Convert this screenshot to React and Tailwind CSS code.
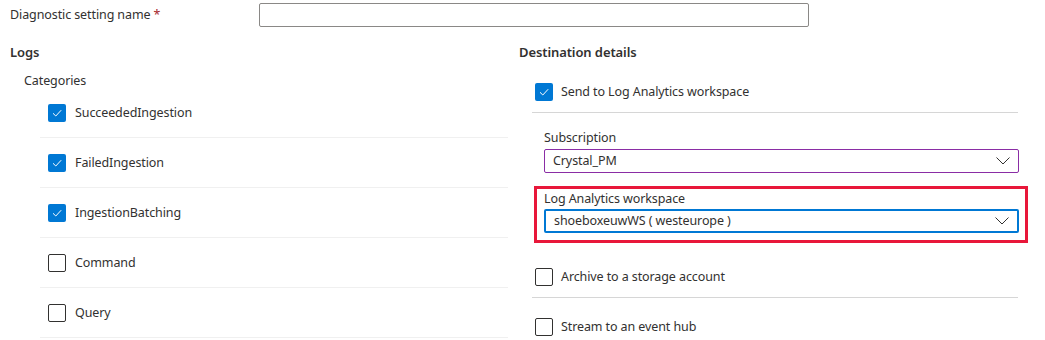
function Check({ checked }) {
  if (checked) {
    return (
      <span className="flex h-[18px] w-[18px] shrink-0 items-center justify-center rounded-[2px] bg-[#0078d4]">
        <svg width="12" height="12" viewBox="0 0 12 12" fill="none">
          <path d="M2 6.3 L4.8 9 L10.2 3.2" stroke="#ffffff" strokeWidth="1" />
        </svg>
      </span>
    );
  }
  return <span className="h-[18px] w-[18px] shrink-0 rounded-[2px] border border-[#323130] bg-white" />;
}

function Chevron() {
  return (
    <svg width="14" height="8" viewBox="0 0 14 8" fill="none">
      <path d="M0.5 0.5 L7 7 L13.5 0.5" stroke="#323130" strokeWidth="1" />
    </svg>
  );
}

function Select({ value, border }) {
  return (
    <div className={`flex h-[24px] w-[475px] items-center justify-between rounded-[2px] pl-[8px] pr-[8px] ${border}`}>
      <span className="pt-[1px] leading-none">{value}</span>
      <Chevron />
    </div>
  );
}

const categories = [
  { name: "SucceededIngestion", checked: true },
  { name: "FailedIngestion", checked: true },
  { name: "IngestionBatching", checked: true },
  { name: "Command", checked: false },
  { name: "Query", checked: false },
];

export default function App() {
  return (
    <div
      className="h-[340px] w-[1045px] overflow-hidden bg-white text-[12.5px] tracking-[-0.1px] text-[#323130]"
      style={{ fontFamily: '"Segoe UI", "Noto Sans", sans-serif' }}
    >
      <div className="flex h-[30px] items-center pl-[10px]">
        <span className="w-[249px] pt-[1px]">
          Diagnostic setting name <span className="text-[#a4262c]">*</span>
        </span>
        <div className="h-[24px] w-[550px] rounded-[2px] border border-[#8a8886]" />
      </div>

      <div className="flex">
        <div className="w-[519px] pl-[10px]">
          <div className="mt-[12px] text-[13px] font-semibold leading-[20px]">Logs</div>
          <div className="mt-[10px] pl-[14px] pt-[1px] leading-[16px]">Categories</div>
          <div className="-mt-[1px] ml-[30px] w-[468px]">
            {categories.map((c) => (
              <div
                key={c.name}
                className="flex h-[50px] items-center gap-[9px] border-b border-[#f0f0f0] pl-[8px]"
              >
                <Check checked={c.checked} />
                <span className="pt-[1px]">{c.name}</span>
              </div>
            ))}
          </div>
        </div>

        <div className="flex-1">
          <div className="mt-[12px] text-[13px] font-semibold leading-[20px]">Destination details</div>
          <div className="ml-[13px] w-[486px]">
            <div className="flex h-[51px] items-center gap-[8px] border-b border-[#d6d6d6] pl-[3px] pt-[10px]">
              <Check checked />
              <span className="pt-[1px]">Send to Log Analytics workspace</span>
            </div>
          </div>

          <div className="ml-[25px] mt-[15px]">
            <div className="pt-[1px] leading-[18px]">Subscription</div>
            <div className="mt-[2px]">
              <Select value="Crystal_PM" border="border border-[#8a2da5]" />
            </div>
          </div>

          <div className="ml-[15px] mt-[13px] w-[494px] border-[3px] border-[#e8173a] pb-[7px] pl-[7px] pr-[6px]">
            <div className="pt-[1px] leading-[18px]">Log Analytics workspace</div>
            <div className="mt-[1px]">
              <Select value="shoeboxeuwWS ( westeurope )" border="border-2 border-[#0078d4]" />
            </div>
          </div>

          <div className="ml-[13px] w-[486px]">
            <div className="flex items-center gap-[8px] border-b border-[#d6d6d6] pb-[11px] pl-[3px] pt-[24px]">
              <Check />
              <span className="pt-[1px] leading-[18px]">Archive to a storage account</span>
            </div>
            <div className="flex items-center gap-[8px] pl-[3px] pt-[19px]">
              <Check />
              <span className="pt-[1px] leading-[18px]">Stream to an event hub</span>
            </div>
          </div>
        </div>
      </div>
    </div>
  );
}
